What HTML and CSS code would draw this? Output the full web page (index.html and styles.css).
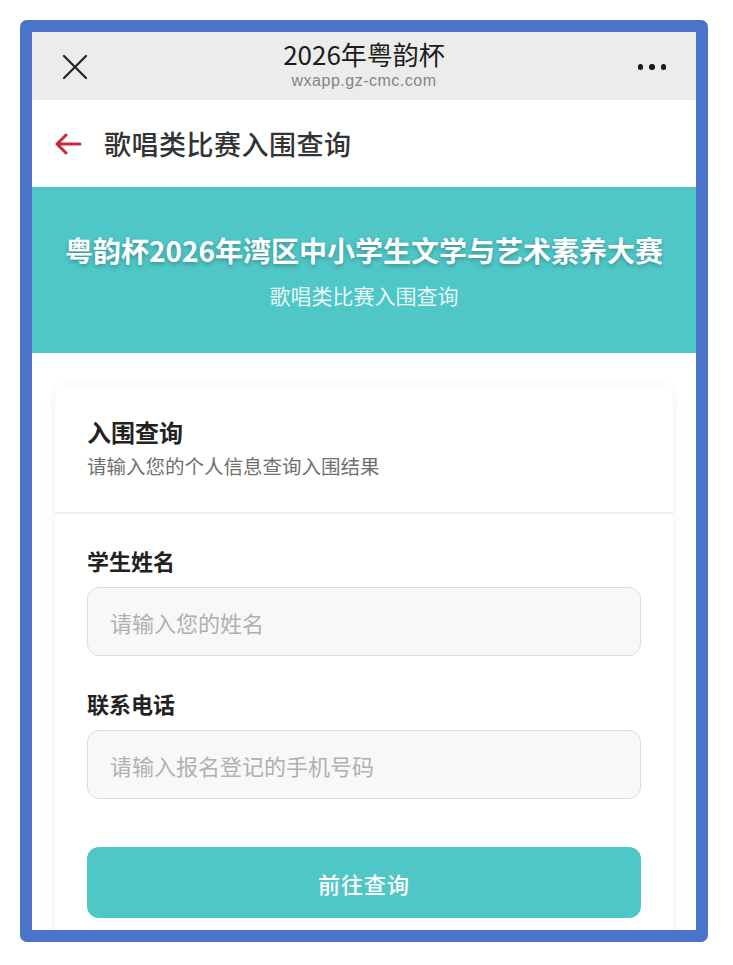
FILE: index.html
```html
<!DOCTYPE html>
<html lang="zh-CN">
<head>
<meta charset="utf-8">
<title>2026年粤韵杯</title>
<link rel="stylesheet" href="styles.css">
</head>
<body>
<div class="frame">
  <header class="topbar">
    <div class="topbar-left">
      <svg class="icon-close" width="26" height="26" viewBox="0 0 26 26" aria-hidden="true">
        <path d="M2 2 L24 24 M24 2 L2 24" stroke="#222" stroke-width="2.2" stroke-linecap="round" fill="none"/>
      </svg>
    </div>
    <div class="topbar-center">
      <div class="topbar-title">2026年粤韵杯</div>
      <div class="topbar-url">wxapp.gz-cmc.com</div>
    </div>
    <div class="topbar-right">
      <span class="dot"></span><span class="dot"></span><span class="dot"></span>
    </div>
  </header>

  <nav class="navbar">
    <svg class="icon-back" width="28" height="22" viewBox="0 0 28 22" aria-hidden="true">
      <path d="M26 11 H3 M12 2 L3 11 L12 20" stroke="#cc2a33" stroke-width="3" stroke-linecap="round" stroke-linejoin="round" fill="none"/>
    </svg>
    <span class="navbar-title">歌唱类比赛入围查询</span>
  </nav>

  <section class="banner">
    <h1 class="banner-title">粤韵杯2026年湾区中小学生文学与艺术素养大赛</h1>
    <p class="banner-sub">歌唱类比赛入围查询</p>
  </section>

  <main class="card">
    <div class="card-head">
      <h2 class="card-title">入围查询</h2>
      <p class="card-desc">请输入您的个人信息查询入围结果</p>
    </div>
    <form class="card-form">
      <label class="field">
        <span class="field-label">学生姓名</span>
        <input class="field-input" type="text" placeholder="请输入您的姓名">
      </label>
      <label class="field">
        <span class="field-label">联系电话</span>
        <input class="field-input" type="tel" placeholder="请输入报名登记的手机号码">
      </label>
      <button class="submit" type="button">前往查询</button>
    </form>
  </main>
</div>
</body>
</html>
```

FILE: styles.css
```css
* { box-sizing: border-box; }

html, body {
  margin: 0;
  padding: 0;
  background: #ffffff;
}

body {
  font-family: "Noto Sans CJK SC", "Noto Sans", sans-serif;
  color: #222;
}

.frame {
  margin: 20px 0 0 20px;
  width: 688px;
  height: 922px;
  border: 12px solid #4a74ca;
  border-radius: 7px;
  overflow: hidden;
  background: #ffffff;
}

/* top bar */
.topbar {
  display: grid;
  grid-template-columns: 1fr auto 1fr;
  align-items: center;
  height: 68px;
  background: #ececec;
  padding: 0 30px 0 30px;
}

.topbar-left {
  display: flex;
  align-items: center;
  padding-top: 2px;
}

.icon-close { display: block; }

.topbar-center {
  display: flex;
  flex-direction: column;
  align-items: center;
  padding-bottom: 3px;
}

.topbar-title {
  font-size: 26px;
  line-height: 30px;
  font-weight: 400;
  color: #1c1c1c;
}

.topbar-url {
  margin-top: 3px;
  font-family: "Liberation Sans", Arial, sans-serif;
  font-size: 16px;
  line-height: 18px;
  color: #858585;
  letter-spacing: 0.5px;
}

.topbar-right {
  display: flex;
  justify-content: flex-end;
  align-items: center;
  gap: 6px;
  padding-top: 2px;
}

.dot {
  width: 5.5px;
  height: 5.5px;
  border-radius: 50%;
  background: #1a1a1a;
}

/* nav bar */
.navbar {
  display: flex;
  align-items: center;
  height: 87px;
  padding-left: 22px;
  gap: 22px;
  background: #ffffff;
}

.icon-back { display: block; }

.navbar-title {
  font-size: 27px;
  font-weight: 500;
  color: #333;
  letter-spacing: 0.5px;
}

/* banner */
.banner {
  height: 166px;
  background: #4fc7c7;
  padding-top: 43px;
  text-align: center;
  color: #ffffff;
}

.banner-title {
  margin: 0;
  font-size: 28px;
  line-height: 40px;
  font-weight: 700;
  text-shadow: 0 2px 4px rgba(0, 0, 0, 0.28);
}

.banner-sub {
  margin: 10px 0 0;
  font-size: 21px;
  line-height: 30px;
  font-weight: 400;
  color: rgba(255, 255, 255, 0.88);
}

/* card */
.card {
  margin: 32px 23px 0;
  background: #ffffff;
  border-radius: 14px;
  box-shadow: 0 2px 12px rgba(0, 0, 0, 0.07);
}

.card-head {
  padding: 30px 32px 32px;
  border-bottom: 2px solid #efefef;
}

.card-title {
  margin: 0;
  font-size: 24px;
  line-height: 34px;
  font-weight: 700;
  color: #222;
}

.card-desc {
  margin: 3px 0 0;
  font-size: 19.5px;
  line-height: 28px;
  color: #6f6f6f;
}

.card-form {
  padding: 31px 32px 40px;
  display: flex;
  flex-direction: column;
}

.field {
  display: flex;
  flex-direction: column;
}

.field + .field { margin-top: 32px; }

.field-label {
  font-size: 22px;
  line-height: 30px;
  font-weight: 700;
  color: #222;
}

.field-input {
  margin-top: 12px;
  height: 69px;
  border: 1.5px solid #dddddd;
  border-radius: 12px;
  background: #f8f8f8;
  padding: 0 22px;
  font-family: "Noto Sans CJK SC", "Noto Sans", sans-serif;
  font-size: 22px;
  color: #333;
  outline: none;
}

.field-input::placeholder {
  color: #b0b0b0;
}

.submit {
  margin-top: 48px;
  height: 71px;
  border: none;
  border-radius: 12px;
  background: #4fc7c7;
  color: #ffffff;
  font-family: "Noto Sans CJK SC", "Noto Sans", sans-serif;
  font-size: 22px;
  font-weight: 500;
  letter-spacing: 1px;
}
```
